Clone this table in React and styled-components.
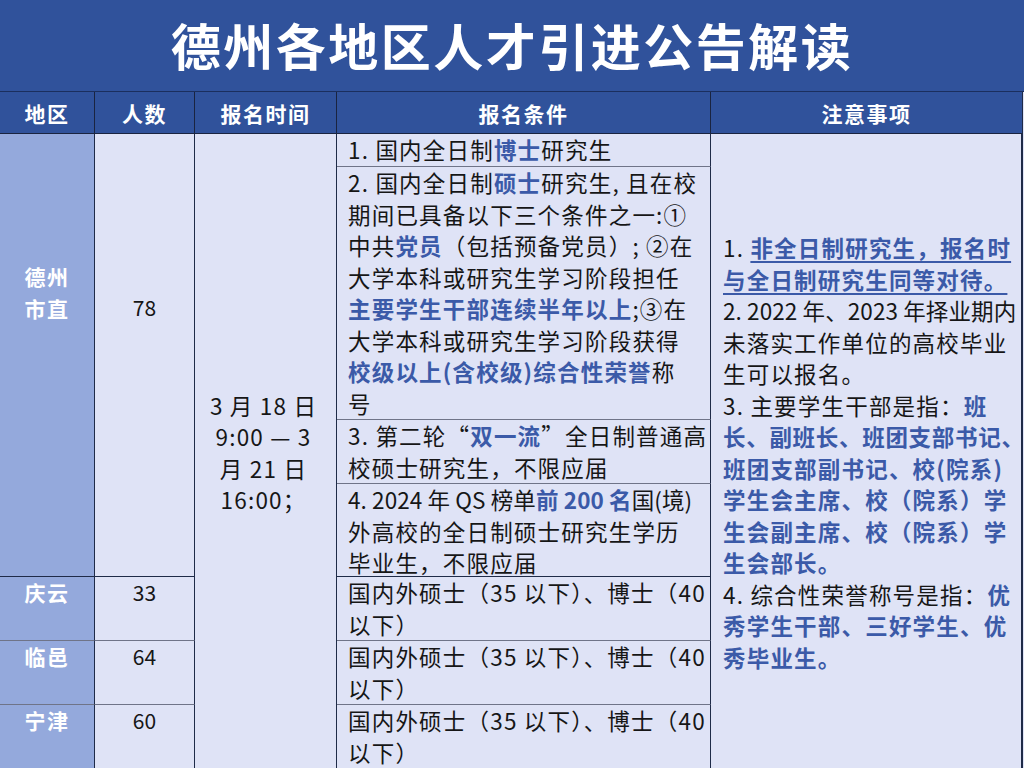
import styled, { createGlobalStyle } from "styled-components";

const GlobalStyle = createGlobalStyle`
  body {
    margin: 0;
    background: #dfe3f6;
    font-family: "Noto Sans CJK SC", "Noto Sans", sans-serif;
  }
`;

const Page = styled.div`
  width: 1024px;
  height: 768px;
  overflow: hidden;
  background: #dfe3f6;
`;

const TitleBar = styled.div`
  height: 92px;
  box-sizing: border-box;
  background: #30529b;
  border-bottom: 1px solid #1b2f5e;
  display: flex;
  align-items: center;
  justify-content: center;
  padding-bottom: 4px;
  color: #fff;
  font-size: 50px;
  font-weight: 700;
  letter-spacing: 2.5px;
`;

const Table = styled.div`
  width: 1022px;
  display: grid;
  grid-template-columns: 95px 100px 142px 374px 311px;
  grid-template-rows: 42px 33px 253px 64px 93px 64px 64px 66px;
  border-right: 1.5px solid #1f2b48;
`;

const Head = styled.div`
  box-sizing: border-box;
  background: #30529b;
  color: #fff;
  font-size: 21px;
  font-weight: 700;
  letter-spacing: 1.5px;
  display: flex;
  align-items: center;
  justify-content: center;
  border-right: ${({ $last }) => ($last ? "none" : "1.5px solid #1a2440")};
  border-bottom: 1.5px solid #1a2440;
`;

const Cell = styled.div`
  box-sizing: border-box;
  grid-column: ${({ $col }) => $col};
  grid-row: ${({ $row }) => $row};
  border-right: 1.5px solid #1f2b48;
  border-bottom: 1px solid ${({ $line }) => $line || "#6f7488"};
  font-size: 22.5px;
  line-height: 31.5px;
  color: #161616;
  letter-spacing: 1.2px;
`;

const Region = styled(Cell)`
  background: #94a9dc;
  color: #fff;
  font-weight: 700;
  font-size: 21px;
  letter-spacing: 1.5px;
  text-align: center;
  padding-top: ${({ $top }) => $top || 0}px;
`;

const Count = styled(Cell)`
  text-align: center;
  font-size: 21px;
  letter-spacing: 0;
  padding-top: ${({ $top }) => $top || 0}px;
`;

const Middle = styled(Cell)`
  display: flex;
  flex-direction: column;
  justify-content: center;
  align-items: ${({ $center }) => ($center ? "center" : "flex-start")};
  padding-left: ${({ $center }) => ($center ? 0 : 12)}px;
  padding-right: ${({ $center }) => ($center ? 4 : 0)}px;
  border-bottom: none;
`;

const Cond = styled(Cell)`
  padding-left: 11px;
`;

const Line = styled.div`
  white-space: nowrap;
  letter-spacing: ${({ $spacing }) => ($spacing != null ? `${$spacing}px` : "inherit")};
`;

const Em = styled.span`
  color: #3b5aa8;
  font-weight: 600;
  text-decoration: ${({ $under }) => ($under ? "underline" : "none")};
  text-decoration-thickness: 1.5px;
  text-underline-offset: 4px;
`;

const conditionsOther = "国内外硕士（35 以下）、博士（40";

export default function App() {
  return (
    <Page>
      <GlobalStyle />
      <TitleBar>德州各地区人才引进公告解读</TitleBar>
      <Table>
        <Head>地区</Head>
        <Head>人数</Head>
        <Head>报名时间</Head>
        <Head>报名条件</Head>
        <Head $last>注意事项</Head>

        <Region $col="1" $row="2 / span 4" $top={127} $line="#1f2b48">
          德州
          <br />
          市直
        </Region>
        <Count $col="2" $row="2 / span 4" $top={158} $line="#1f2b48">
          78
        </Count>

        <Middle $col="3" $row="2 / span 7" $center>
          <Line>3 月 18 日</Line>
          <Line>9:00 — 3</Line>
          <Line>月 21 日</Line>
          <Line>16:00；</Line>
        </Middle>

        <Cond $col="4" $row="2">
          <Line>
            1. 国内全日制<Em>博士</Em>研究生
          </Line>
        </Cond>
        <Cond $col="4" $row="3">
          <Line>
            2. 国内全日制<Em>硕士</Em>研究生, 且在校
          </Line>
          <Line>期间已具备以下三个条件之一:①</Line>
          <Line>
            中共<Em>党员</Em>（包括预备党员）; ②在
          </Line>
          <Line>大学本科或研究生学习阶段担任</Line>
          <Line>
            <Em>主要学生干部连续半年以上</Em>;③在
          </Line>
          <Line>大学本科或研究生学习阶段获得</Line>
          <Line>
            <Em>校级以上(含校级)综合性荣誉</Em>称
          </Line>
          <Line>号</Line>
        </Cond>
        <Cond $col="4" $row="4">
          <Line>
            3. 第二轮“<Em>双一流</Em>”全日制普通高
          </Line>
          <Line>校硕士研究生，不限应届</Line>
        </Cond>
        <Cond $col="4" $row="5" $line="#1f2b48">
          <Line $spacing={0.1}>
            4. 2024 年 QS 榜单<Em>前 200 名</Em>国(境)
          </Line>
          <Line>外高校的全日制硕士研究生学历</Line>
          <Line>毕业生，不限应届</Line>
        </Cond>

        <Middle $col="5" $row="2 / span 7">
          <Line>
            1. <Em $under>非全日制研究生，报名时</Em>
          </Line>
          <Line>
            <Em $under>与全日制研究生同等对待。</Em>
          </Line>
          <Line $spacing={0.1}>2. 2022 年、2023 年择业期内</Line>
          <Line>未落实工作单位的高校毕业</Line>
          <Line>生可以报名。</Line>
          <Line>
            3. 主要学生干部是指：<Em>班</Em>
          </Line>
          <Line $spacing={0.7}>
            <Em>长、副班长、班团支部书记、</Em>
          </Line>
          <Line>
            <Em>班团支部副书记、校(院系)</Em>
          </Line>
          <Line>
            <Em>学生会主席、校（院系）学</Em>
          </Line>
          <Line>
            <Em>生会副主席、校（院系）学</Em>
          </Line>
          <Line>
            <Em>生会部长。</Em>
          </Line>
          <Line>
            4. 综合性荣誉称号是指：<Em>优</Em>
          </Line>
          <Line>
            <Em>秀学生干部、三好学生、优</Em>
          </Line>
          <Line>
            <Em>秀毕业生。</Em>
          </Line>
        </Middle>

        {[
          ["庆云", "33"],
          ["临邑", "64"],
          ["宁津", "60"],
        ].map(([name, num], i) => (
          <>
            <Region key={name} $col="1" $row={6 + i}>
              {name}
            </Region>
            <Count key={name + "n"} $col="2" $row={6 + i}>
              {num}
            </Count>
            <Cond key={name + "c"} $col="4" $row={6 + i}>
              <Line>{conditionsOther}</Line>
              <Line>以下）</Line>
            </Cond>
          </>
        ))}
      </Table>
    </Page>
  );
}
